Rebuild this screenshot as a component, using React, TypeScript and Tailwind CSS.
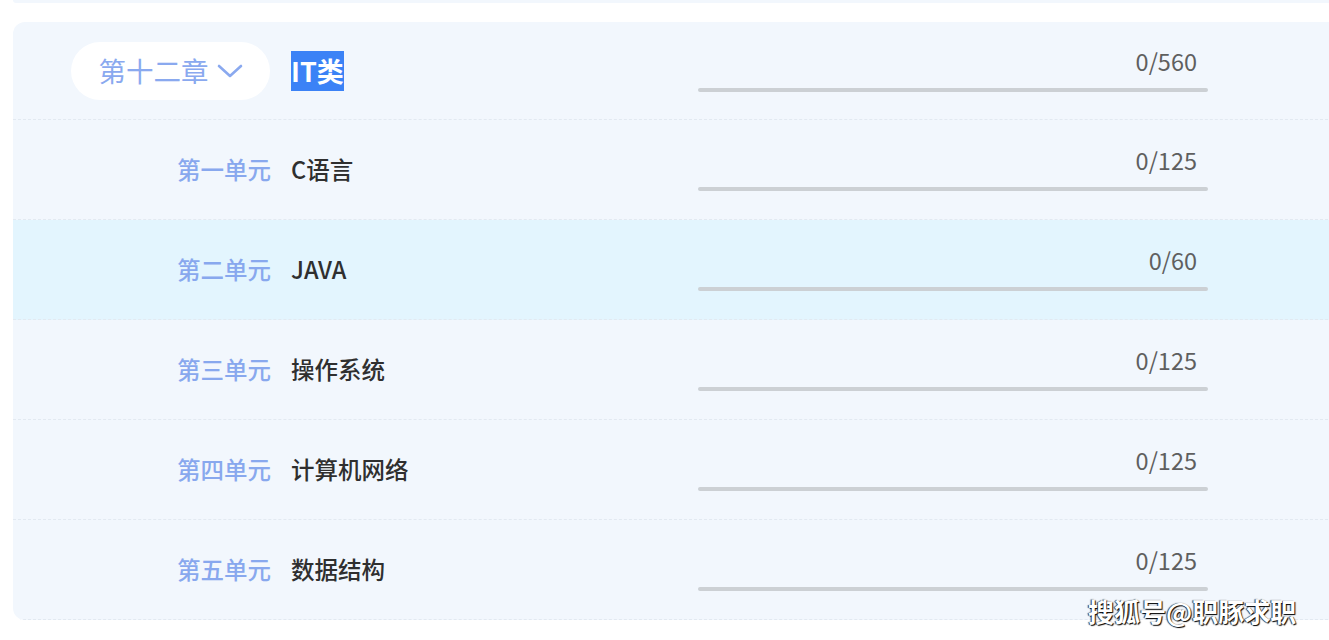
import React from 'react';

const units = [
  { label: '第一单元', title: 'C语言', done: 0, total: 125, active: false },
  { label: '第二单元', title: 'JAVA', done: 0, total: 60, active: true },
  { label: '第三单元', title: '操作系统', done: 0, total: 125, active: false },
  { label: '第四单元', title: '计算机网络', done: 0, total: 125, active: false },
  { label: '第五单元', title: '数据结构', done: 0, total: 125, active: false },
];

const Progress: React.FC<{ done: number; total: number; top: string }> = ({ done, total, top }) => (
  <div className={`w-[510px] flex flex-col ${top}`}>
    <div className="text-right pr-[11px] text-[23.5px] leading-[28px] text-[#5f5f5f]">
      {done}/{total}
    </div>
    <div className="mt-[13px] h-[4px] rounded-full bg-[#ccd0d4]" />
  </div>
);

export default function App() {
  return (
    <div
      className="relative w-[1329px] h-[640px] overflow-hidden bg-white"
      style={{ fontFamily: '"Noto Sans CJK SC", "Noto Sans", sans-serif' }}
    >
      {/* previous card edge */}
      <div className="ml-[13px] w-[1330px] h-[3px] rounded-b-[12px] bg-[#f2f7fd]" />

      <div className="ml-[13px] mt-[19px] w-[1330px] rounded-[12px] bg-[#f2f7fd] overflow-hidden">
        {/* chapter header */}
        <div className="h-[98px] flex items-start border-b border-dashed border-[#e2e9f1]">
          <div className="w-[258px] pl-[58px] pt-[20px]">
            <div className="w-[199px] h-[58px] rounded-full bg-white flex items-center justify-center gap-[8px] text-[27.5px] text-[#8aa9ef]">
              <span>第十二章</span>
              <svg width="26" height="16" viewBox="0 0 26 16" fill="none" stroke="#8aa9ef" strokeWidth="2.6" strokeLinecap="round" strokeLinejoin="round">
                <path d="M2 3l11 10L24 3" />
              </svg>
            </div>
          </div>
          <div className="w-[427px] pl-[20px] pt-[29px]">
            <span className="inline-block bg-[#3b82f6] text-white font-bold text-[27px] leading-[40px]">IT类</span>
          </div>
          <Progress done={0} total={560} top="pt-[25px]" />
        </div>

        {units.map((u) => (
          <div
            key={u.label}
            className={`h-[100px] flex items-start border-b border-dashed border-[#e2e9f1] ${u.active ? 'bg-[#e3f5fe]' : ''}`}
          >
            <div className="w-[258px] pt-[34px] text-right text-[23.5px] leading-[30px] font-medium text-[#88a8ee]">
              {u.label}
            </div>
            <div className="w-[427px] pl-[20px] pt-[34px] text-[23.5px] leading-[30px] font-medium text-[#2f2f2f]">
              {u.title}
            </div>
            <Progress done={u.done} total={u.total} top="pt-[26px]" />
          </div>
        ))}
      </div>

      {/* watermark */}
      <div className="absolute left-[1088px] top-[594px] text-[26px] leading-[34px] font-bold text-white [text-shadow:1px_1px_1px_#000,-1px_0_1px_#333]">
        搜狐号@职豚求职
      </div>
    </div>
  );
}
